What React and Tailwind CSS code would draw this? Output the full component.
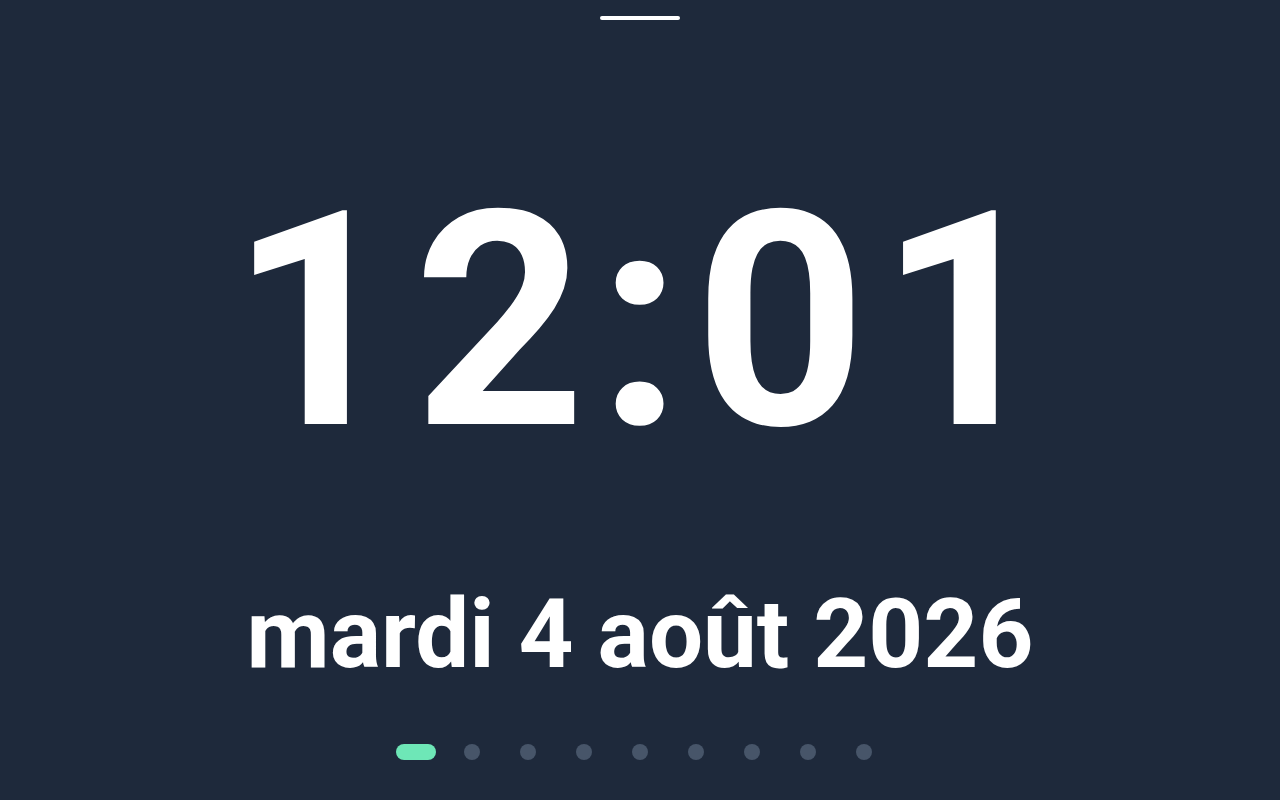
export default function App() {
  const dots = [0, 1, 2, 3, 4, 5, 6, 7, 8];
  return (
    <div className="w-[1280px] h-[800px] bg-[#1e293b] flex flex-col items-center overflow-hidden" style={{ fontFamily: "Roboto, 'Noto Sans', sans-serif" }}>
      <div className="mt-4 w-20 h-1 rounded-full bg-white" />
      <div className="mt-[152px] pl-[12px] text-white font-bold text-[300px] leading-none tracking-[12px]">12:01</div>
      <div className="mt-[114px] text-white font-bold text-[96px] leading-none">mardi 4 août 2026</div>
      <div className="mt-[62px] flex">
        {dots.map((i) => (
          <div key={i} className="w-14 h-4 flex items-center justify-center">
            {i === 0 ? (
              <div className="w-10 h-4 rounded-full bg-[#6ee7b7]" />
            ) : (
              <div className="w-4 h-4 rounded-full bg-[#475569]" />
            )}
          </div>
        ))}
      </div>
    </div>
  );
}
